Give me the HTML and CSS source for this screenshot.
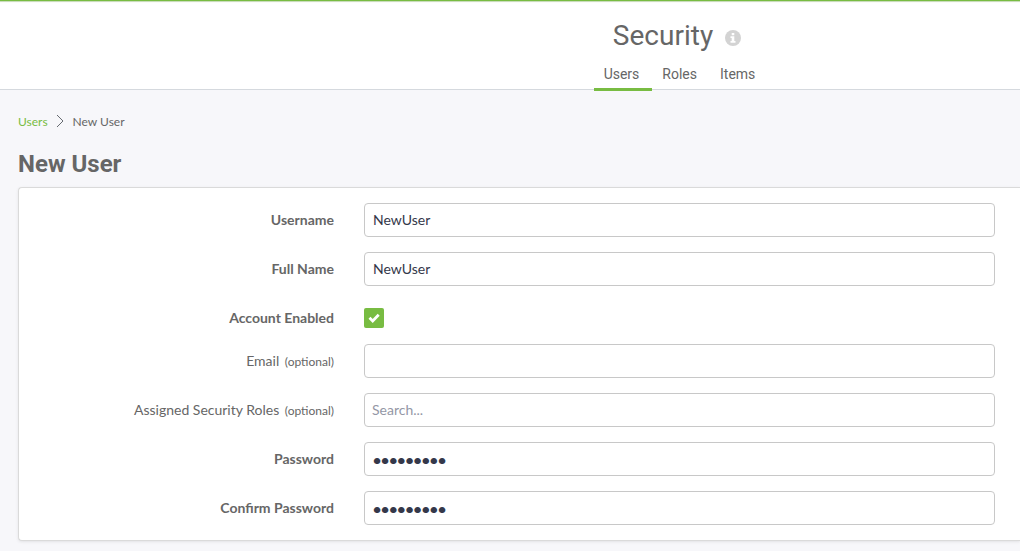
FILE: index.html
```html
<!DOCTYPE html>
<html lang="en">
<head>
<meta charset="utf-8">
<title>Security - New User</title>
<link rel="stylesheet" href="styles.css">
</head>
<body>
<header class="header">
  <div class="title-row">
    <h1 class="title">Security</h1>
    <svg class="info" viewBox="0 0 16 16" aria-hidden="true"><circle cx="8" cy="8" r="8" fill="#d3d3d3"/><path fill="#fff" d="M6.700 3h2.600v2.200H6.700zM5.500 6.300h3.800v4.700h1.200v1.700h-5V11h1.200V8H5.500z"/></svg>
  </div>
  <nav class="tabs">
    <a class="tab tab-active" href="#">Users</a>
    <a class="tab" href="#">Roles</a>
    <a class="tab" href="#">Items</a>
  </nav>
</header>
<main class="main">
  <nav class="crumbs">
    <a class="crumb-link" href="#">Users</a>
    <svg class="chevron" viewBox="0 0 8 12" aria-hidden="true"><path d="M1 0l6 6-6 6" fill="none" stroke="#666a70"/></svg>
    <span>New User</span>
  </nav>
  <h2 class="heading">New User</h2>
  <form class="panel">
    <div class="row">
      <label class="label" for="username">Username</label>
      <input class="field" id="username" type="text" value="NewUser">
    </div>
    <div class="row">
      <label class="label" for="fullname">Full Name</label>
      <input class="field" id="fullname" type="text" value="NewUser">
    </div>
    <div class="row row-check">
      <label class="label" for="enabled">Account Enabled</label>
      <span class="check">
        <input class="check-box" id="enabled" type="checkbox" checked>
        <svg class="check-mark" viewBox="0 0 20 20" aria-hidden="true"><path d="m5.500 9.800 3.200 3.200 6-6.200" fill="none" stroke="#fff" stroke-width="2.800"/></svg>
      </span>
    </div>
    <div class="row">
      <label class="label label-optional" for="email">Email <span class="hint">(optional)</span></label>
      <input class="field" id="email" type="email">
    </div>
    <div class="row">
      <label class="label label-optional" for="roles">Assigned Security Roles <span class="hint">(optional)</span></label>
      <input class="field field-search" id="roles" type="text" placeholder="Search...">
    </div>
    <div class="row">
      <label class="label" for="password">Password</label>
      <input class="field field-password" id="password" type="password" value="password1">
    </div>
    <div class="row">
      <label class="label" for="confirm">Confirm Password</label>
      <input class="field field-password" id="confirm" type="password" value="password1">
    </div>
  </form>
</main>
</body>
</html>
```
FILE: styles.css
```css
* { box-sizing: border-box; }
body {
  margin: 0;
  background: #f7f7fa;
  color: #666;
  font-family: Lato, sans-serif;
  font-size: 14px;
}
.header {
  display: flex;
  flex-direction: column;
  align-items: center;
  padding: 18px 0 0 334px;
  background: #fff;
  border-top: 1px solid #78bc42;
  border-bottom: 1px solid #d5d9de;
  box-shadow: inset 0 2px 1px -1px #c5d9b5;
  font-family: Roboto, sans-serif;
}
.title-row {
  display: flex;
  align-items: center;
  gap: 12px;
}
.title {
  margin: 0;
  font-size: 28px;
  font-weight: 400;
  line-height: 34px;
}
.info {
  width: 16px;
  height: 16px;
  margin-top: 4px;
}
.tabs {
  display: flex;
  margin: 6px 0 -2px 8px;
}
.tab {
  padding: 6px 13px 5px 10px;
  border-bottom: 3px solid transparent;
  color: #666;
  font-size: 14px;
  line-height: 18px;
  text-decoration: none;
}
.tab-active { border-color: #78bc42; }
.main { padding: 24px 0 10px 18px; }
.crumbs {
  display: flex;
  align-items: center;
  font-size: 12px;
  line-height: 16px;
}
.crumb-link {
  color: #78bc42;
  text-decoration: none;
}
.chevron {
  width: 8px;
  height: 12px;
  margin: 0 9px 2px 8px;
}
.heading {
  margin: 20px 0 8px;
  font-family: Roboto, sans-serif;
  font-size: 24px;
  font-weight: 700;
  line-height: 29px;
}
.panel {
  display: grid;
  gap: 15px;
  padding: 15px 25px 15px 0;
  background: #fff;
  border: 1px solid #dadada;
  border-right: 0;
  border-radius: 4px 0 0 4px;
  box-shadow: 0 1px 3px #e2e2e5;
}
.row {
  display: grid;
  grid-template-columns: 315px 1fr;
  gap: 30px;
  align-items: center;
}
.label {
  font-weight: 700;
  line-height: 20px;
  text-align: right;
}
.label-optional { font-weight: 400; }
.hint {
  margin-left: 2px;
  font-size: 12px;
}
.field {
  width: 100%;
  height: 34px;
  padding: 0 8px 2px;
  background: #fff;
  border: 1px solid #c8c8c8;
  border-radius: 4px;
  color: #34384a;
  font: 14px Lato, sans-serif;
}
.field-search {
  padding-right: 7px;
  padding-left: 7px;
}
.field-password {
  padding-bottom: 0;
  font-weight: 900;
}
.field::placeholder {
  color: #9497a6;
  opacity: 1;
}
.row-check { padding: 7px 0 1px; }
.check {
  display: grid;
  width: 20px;
  height: 20px;
}
.check-box,
.check-mark {
  grid-area: 1 / 1;
  width: 20px;
  height: 20px;
}
.check-box {
  appearance: none;
  margin: 0;
  border-radius: 2px;
}
.check-box:checked { background: #78bc42; }
.check-mark { pointer-events: none; }
```
